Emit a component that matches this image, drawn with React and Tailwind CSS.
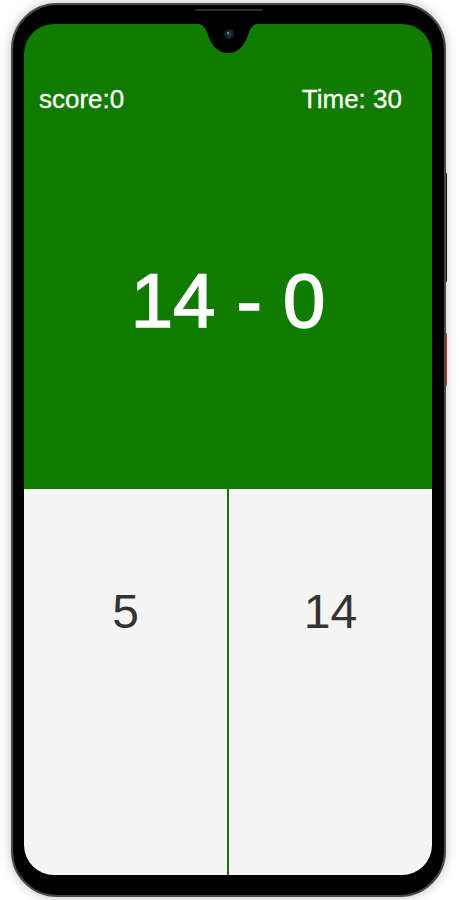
import React from "react";

const font = { fontFamily: '"Liberation Sans", Arial, sans-serif' };

const Notch = () => (
    <svg
        className="absolute left-[169px] top-[-1px]"
        width="70"
        height="31"
        viewBox="0 0 70 31"
    >
        <path
            d="M0 0 C10 0 12 4 15 12 C19 24 26 30 35 30 C44 30 51 24 55 12 C58 4 60 0 70 0 Z"
            fill="#000"
        />
        <circle cx="36" cy="11" r="5" fill="#1c1f22" />
        <circle cx="36" cy="11" r="2.5" fill="#1d3a48" />
        <circle cx="35" cy="10" r="1" fill="#5aa9c4" />
    </svg>
);

export default function App() {
    const score = 0;
    const time = 30;
    const question = "14 - 0";
    const answers = [5, 14];

    return (
        <div className="w-[460px] h-[900px] bg-white overflow-hidden relative" style={font}>
            {/* side buttons */}
            <div className="absolute left-[444px] top-[172px] w-[3px] h-[111px] bg-[#1a1a1a] rounded-r-sm" />
            <div className="absolute left-[444px] top-[332px] w-[3px] h-[55px] bg-[#d83a3a] rounded-r-sm" />

            {/* phone body */}
            <div className="ml-[11px] mt-[3px] w-[435px] h-[894px] rounded-[46px] bg-black border-2 border-[#4a4a4a] shadow-[0_0_12px_rgba(0,0,0,0.25)] relative pt-[19px] pl-[11px] pr-[12px] pb-[20px]">
                {/* speaker */}
                <div className="absolute left-[182px] top-[4px] w-[68px] h-[2px] rounded-full bg-[#2e2e2e]" />

                {/* screen */}
                <div className="relative w-[408px] h-[851px] rounded-[30px] overflow-hidden flex flex-col">
                    <div className="h-[465px] bg-[#117a00] flex flex-col text-white">
                        <div className="flex justify-between pt-[62px] pl-[15px] pr-[30px] text-[26px] leading-none [-webkit-text-stroke:0.3px_white]">
                            <span>score:{score}</span>
                            <span>Time: {time}</span>
                        </div>
                        <div className="flex-1 flex items-center justify-center text-[76px] leading-none [-webkit-text-stroke:1.6px_white]">
                            {question}
                        </div>
                    </div>
                    <div className="flex-1 flex bg-[#f4f4f4]">
                        {answers.map((a, i) => (
                            <div
                                key={i}
                                className={
                                    i === 0
                                        ? "flex-1 flex justify-center pt-[99px] text-[48px] leading-none text-[#333] border-r-2 border-[#117a00]"
                                        : "flex-1 flex justify-center pt-[99px] text-[48px] leading-none text-[#333]"
                                }
                            >
                                {a}
                            </div>
                        ))}
                    </div>
                    <Notch />
                </div>
            </div>
        </div>
    );
}
